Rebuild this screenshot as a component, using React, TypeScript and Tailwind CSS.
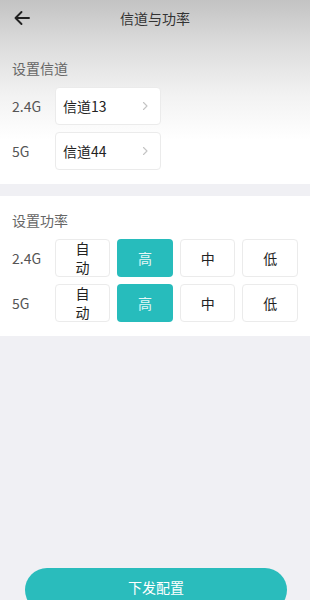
import React from 'react';

const font = { fontFamily: '"Noto Sans CJK SC", "Noto Sans", sans-serif' };

const channels = [
  { band: '2.4G', value: '信道13' },
  { band: '5G', value: '信道44' },
];

const levels = ['自动', '高', '中', '低'];

const BackArrow = () => (
  <svg width="18" height="18" viewBox="0 0 18 18" fill="none">
    <path d="M16 9H2.5M8.5 3L2.5 9l6 6" stroke="#222" strokeWidth="1.9" strokeLinecap="round" strokeLinejoin="round" />
  </svg>
);

const Chevron = () => (
  <svg width="7" height="10" viewBox="0 0 7 10" fill="none">
    <path d="M1.5 1.5L5 5l-3.5 3.5" stroke="#c4c4c4" strokeWidth="1.1" strokeLinecap="round" strokeLinejoin="round" />
  </svg>
);

const App = () => {
  return (
    <div className="flex h-[600px] w-[310px] flex-col overflow-hidden bg-[#f0f0f4]" style={font}>
      <div className="shrink-0 bg-[linear-gradient(to_bottom,#c3c3c3_0px,#dcdcdc_45px,#f2f2f2_95px,#ffffff_140px)]">
        <header className="relative flex h-[36px] items-center justify-center">
          <span className="absolute left-[13px] top-[9px]">
            <BackArrow />
          </span>
          <h1 className="text-[14px] leading-[18px] text-[#333]">信道与功率</h1>
        </header>

        <section className="px-3 pt-[23px] pb-[14px]">
          <p className="mb-[10px] text-[14px] leading-[18px] text-[#666]">设置信道</p>
          <ul className="flex flex-col gap-[7px]">
            {channels.map((c) => (
              <li key={c.band} className="flex items-center">
                <span className="w-[43px] text-[14px] text-[#555]">{c.band}</span>
                <div className="flex h-[38px] w-[106px] items-center justify-between rounded-[4px] border border-[#ebebeb] bg-white pl-[7px] pr-[11px]">
                  <span className="text-[14px] text-[#222]">{c.value}</span>
                  <Chevron />
                </div>
              </li>
            ))}
          </ul>
        </section>
      </div>

      <div className="h-[12px] shrink-0 bg-[#f0f0f4]" />

      <section className="shrink-0 bg-white px-3 pt-[15px] pb-[14px]">
        <p className="mb-[10px] text-[14px] leading-[18px] text-[#666]">设置功率</p>
        <ul className="flex flex-col gap-[7px]">
          {channels.map((c) => (
            <li key={c.band} className="flex items-center">
              <span className="w-[43px] text-[14px] text-[#555]">{c.band}</span>
              <div className="grid w-[245px] grid-cols-4 gap-[7px]">
                {levels.map((l) => (
                  <div
                    key={l}
                    className={
                      l === '高'
                        ? 'flex h-[38px] items-center justify-center rounded-[4px] bg-[#27bcbc] text-[14px] text-[#e6f7f7]'
                        : 'flex h-[38px] items-center justify-center rounded-[4px] border border-[#ebebeb] bg-white text-[14px] text-[#222]'
                    }
                  >
                    <span className="w-[14px] text-center leading-[19px]">{l}</span>
                  </div>
                ))}
              </div>
            </li>
          ))}
        </ul>
      </section>

      <div className="mt-[232px] flex shrink-0 justify-center pl-[2px]">
        <button className="h-[44px] w-[262px] rounded-full bg-[#2abcbc] pb-[5px] text-[14px] text-white">
          下发配置
        </button>
      </div>
    </div>
  );
};

export default App;
